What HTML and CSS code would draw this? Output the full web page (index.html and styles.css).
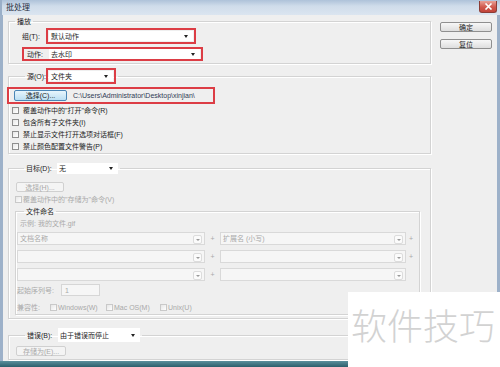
FILE: index.html
```html
<!DOCTYPE html>
<html lang="zh-CN">
<head>
    <meta charset="UTF-8">
    <title>批处理</title>
    <link rel="stylesheet" href="styles.css">
</head>
<body>
<div class="window">
    <div class="titlebar">
        <span class="title">批处理</span>
        <span class="close">
            <svg width="9" height="7" viewBox="0 0 9 7"><path d="M1.5 0.5 L7.5 6.5 M7.5 0.5 L1.5 6.5" stroke="#fff" stroke-width="1.6"/></svg>
        </span>
    </div>

    <div class="client">
        <div class="main">
            <fieldset class="grp grp-play">
                <legend>播放</legend>
                <div class="row row-set">
                    <span class="lbl lbl-set">组(T):</span>
                    <span class="mark mark-set"><span class="select">默认动作<i class="arr"></i></span></span>
                </div>
                <div class="row row-action">
                    <span class="mark mark-action"><span class="lbl lbl-action">动作:</span><span class="select">去水印<i class="arr"></i></span></span>
                </div>
            </fieldset>

            <fieldset class="grp grp-src">
                <legend class="lg-src">
                    <span class="lbl lbl-src">源(O):</span>
                    <span class="mark mark-src"><span class="select">文件夹<i class="arr"></i></span></span>
                </legend>
                <div class="mark mark-choose">
                    <span class="btn btn-focus btn-choose">选择(C)...</span>
                    <span class="path">C:\Users\Administrator\Desktop\xinjian\</span>
                </div>
                <div class="chk"><i class="box"></i>覆盖动作中的"打开"命令(R)</div>
                <div class="chk"><i class="box"></i>包含所有子文件夹(I)</div>
                <div class="chk"><i class="box"></i>禁止显示文件打开选项对话框(F)</div>
                <div class="chk"><i class="box"></i>禁止颜色配置文件警告(P)</div>
            </fieldset>

            <fieldset class="grp grp-dst">
                <legend class="lg-dst">
                    <span class="lbl lbl-dst">目标(D):</span>
                    <span class="select sel-dst">无<i class="arr"></i></span>
                </legend>
                <span class="btn btn-off btn-dst">选择(H)...</span>
                <div class="chk chk-off chk-save"><i class="box"></i>覆盖动作中的"存储为"命令(V)</div>

                <fieldset class="grp grp-name">
                    <legend class="lg-name">文件命名</legend>
                    <div class="sample off">示例: 我的文件.gif</div>
                    <div class="name-row">
                        <span class="select off sel-left">文档名称<i class="arr"></i></span>
                        <span class="plus">+</span>
                        <span class="select off sel-right">扩展名 (小写)<i class="arr"></i></span>
                        <span class="plus plus-end">+</span>
                    </div>
                    <div class="name-row">
                        <span class="select off sel-left"><i class="arr"></i></span>
                        <span class="plus">+</span>
                        <span class="select off sel-right"><i class="arr"></i></span>
                        <span class="plus plus-end">+</span>
                    </div>
                    <div class="name-row">
                        <span class="select off sel-left"><i class="arr"></i></span>
                        <span class="plus">+</span>
                        <span class="select off sel-right"><i class="arr"></i></span>
                    </div>
                    <div class="serial-row off">
                        <span class="lbl-serial">起始序列号:</span>
                        <span class="input">1</span>
                    </div>
                    <div class="compat-row off">
                        <span class="lbl-compat">兼容性:</span>
                        <span class="opt opt-win"><i class="box"></i>Windows(W)</span>
                        <span class="opt opt-mac"><i class="box"></i>Mac OS(M)</span>
                        <span class="opt"><i class="box"></i>Unix(U)</span>
                    </div>
                </fieldset>
            </fieldset>

            <fieldset class="grp grp-err">
                <legend class="lg-err">
                    <span class="lbl lbl-err">错误(B):</span>
                    <span class="select sel-err">由于错误而停止<i class="arr"></i></span>
                </legend>
                <span class="btn btn-off btn-save">存储为(E)...</span>
            </fieldset>
        </div>

        <div class="side">
            <span class="btn btn-side">确定</span>
            <span class="btn btn-side">复位</span>
        </div>
    </div>

    <div class="taskbar"></div>

    <div class="watermark">软件技巧</div>
</div>
</body>
</html>
```

FILE: styles.css
```css
* {
    box-sizing: border-box;
}
body {
    margin: 0;
    font-family: "Liberation Sans", "Noto Sans CJK SC", sans-serif;
    font-size: 7px;
    line-height: 1;
    color: #1c1c1c;
    white-space: nowrap;
}
.window {
    position: relative;
    width: 500px;
    height: 367px;
    overflow: hidden;
    background: #efefef;
}

/* title bar */
.titlebar {
    height: 15px;
    display: flex;
    align-items: center;
    justify-content: space-between;
    padding: 0 3px 0 4px;
    background: linear-gradient(#aec2d9, #cfdcea 40%, #dbe5f0);
    border-left: 2px solid #9aafc8;
}
.title {
    font-size: 8px;
    color: #1f2b3b;
}
.close {
    width: 18px;
    height: 12px;
    margin-top: -2px;
    display: flex;
    align-items: center;
    justify-content: center;
    background: linear-gradient(#e8a096, #d0594d 55%, #c2443a);
    border: 1px solid #8c3c35;
    border-top: none;
    border-radius: 0 0 3px 3px;
}

/* client area */
.client {
    height: 346px;
    display: flex;
    padding: 0 5px;
    border-left: 3px solid #9db1c9;
    border-right: 3px solid #9db1c9;
    overflow: hidden;
}
.main {
    width: 423px;
    flex: none;
}
.side {
    width: 52px;
    margin-left: 9px;
    padding-top: 7px;
    display: flex;
    flex-direction: column;
    gap: 7px;
}
.taskbar {
    height: 6px;
    background: linear-gradient(#5a8f9c, #2c5f6c);
}

/* group boxes */
.grp {
    margin: 0;
    padding: 0;
    min-width: 0;
    border: 1px solid #d3d3d3;
    box-shadow: inset 1px 1px 0 #fff, 1px 1px 0 #fff;
}
.grp legend {
    height: 12px;
    padding: 0 2px;
    margin-left: 6px;
    display: flex;
    align-items: center;
}
.row {
    display: flex;
    align-items: center;
}
.lbl {
    flex: none;
}

/* red highlight frames */
.mark {
    display: flex;
    align-items: center;
    border: 2px solid #dc3d45;
    padding: 1px;
}

/* combo boxes */
.select {
    position: relative;
    display: flex;
    align-items: center;
    height: 100%;
    padding-left: 2px;
    background: #fff;
}
.select .arr {
    position: absolute;
    right: 5px;
    top: 50%;
    margin-top: -1px;
    border-left: 2px solid transparent;
    border-right: 2px solid transparent;
    border-top: 3px solid #222;
}
.select.off {
    background: #f6f6f6;
    border: 1px solid #d9d9d9;
    color: #a9a9a9;
}
.select.off .arr {
    right: 2px;
    margin-top: -4px;
    width: 9px;
    height: 9px;
    border: 1px solid #dcdcdc;
    border-radius: 2px;
    background: #fbfbfb;
}
.select.off .arr::after {
    content: "";
    position: absolute;
    left: 2px;
    top: 3px;
    border-left: 2px solid transparent;
    border-right: 2px solid transparent;
    border-top: 2px solid #9a9a9a;
}

/* buttons */
.btn {
    display: flex;
    align-items: center;
    justify-content: center;
    height: 10px;
    border: 1px solid #8f8f8f;
    border-radius: 2px;
    background: linear-gradient(#f7f7f7, #dedede);
}
.btn-side {
    width: 52px;
}
.btn-focus {
    border-color: #4a86b6;
    background: linear-gradient(#e8f5fc, #bcdff3);
}
.btn-off {
    border-color: #d0d0d0;
    background: #f4f4f4;
    color: #a9a9a9;
}

/* check boxes */
.box {
    display: inline-block;
    flex: none;
    width: 7px;
    height: 7px;
    border: 1px solid #8e8e8e;
    background: linear-gradient(135deg, #e6e6e6, #fff);
}
.chk {
    display: flex;
    align-items: center;
    height: 12px;
    padding-left: 3px;
}
.chk .box {
    margin-right: 4px;
}
.off,
.chk-off {
    color: #a9a9a9;
}
.off .box,
.chk-off .box {
    border-color: #c9c9c9;
}

/* play group */
.grp-play {
    padding-bottom: 2px;
}
.row-set {
    height: 16px;
    margin-top: 1px;
    padding-left: 13px;
}
.lbl-set {
    width: 24px;
}
.mark-set {
    width: 150px;
    height: 16px;
}
.mark-set .select {
    width: 100%;
}
.row-action {
    height: 14px;
    margin-top: 3px;
    padding-left: 13px;
}
.mark-action {
    width: 181px;
    height: 14px;
    padding: 0 1px 0 3px;
}
.lbl-action {
    width: 22px;
}
.mark-action .select {
    flex: 1;
}

/* source group */
.grp-src {
    margin-top: 4px;
    padding-bottom: 1px;
}
.grp-src .lg-src {
    height: 16px;
    margin-left: 16px;
}
.lbl-src {
    width: 19px;
}
.mark-src {
    width: 70px;
    height: 16px;
}
.mark-src .select {
    width: 100%;
}
.mark-choose {
    width: 208px;
    height: 17px;
    margin: 3px 0 0 -2px;
    padding: 0 0 0 5px;
}
.btn-choose {
    width: 53px;
    height: 11px;
}
.path {
    margin-left: 6px;
    color: #2f3b55;
}

/* destination group */
.grp-dst {
    margin-top: 8px;
    padding-bottom: 3px;
}
.grp-dst .lg-dst {
    margin-left: 15px;
}
.lbl-dst {
    width: 31px;
}
.sel-dst {
    width: 61px;
    height: 11px;
}
.btn-dst {
    width: 48px;
    margin: 8px 0 0 7px;
}
.chk-save {
    height: 10px;
    margin-top: 2px;
    padding-left: 6px;
}
.chk-save .box {
    margin-right: 1px;
}

/* file naming */
.grp-name {
    width: 405px;
    margin: 1px 0 0 6px;
    padding-bottom: 1px;
}
.grp-name .lg-name {
    margin-left: 8px;
}
.sample {
    height: 10px;
    margin-top: 1px;
    padding-left: 4px;
    display: flex;
    align-items: center;
}
.name-row {
    display: flex;
    height: 13px;
    margin-top: 4px;
    padding-left: 1px;
}
.name-row + .name-row {
    margin-top: 5px;
}
.sel-left {
    width: 188px;
}
.sel-right {
    width: 186px;
}
.plus {
    width: 15px;
    display: flex;
    align-items: center;
    justify-content: center;
    color: #a9a9a9;
}
.plus-end {
    width: 10px;
}
.serial-row,
.compat-row {
    display: flex;
    align-items: center;
    height: 12px;
    padding-left: 1px;
}
.serial-row {
    margin-top: 3px;
}
.lbl-serial {
    width: 44px;
}
.input {
    width: 39px;
    height: 12px;
    padding-left: 3px;
    display: flex;
    align-items: center;
    border: 1px solid #d6d6d6;
    background: #f6f6f6;
}
.compat-row {
    margin-top: 5px;
}
.lbl-compat {
    width: 33px;
}
.opt {
    display: flex;
    align-items: center;
}
.opt .box {
    margin-right: 1px;
}
.opt-win {
    width: 56px;
}
.opt-mac {
    width: 54px;
}

/* error group */
.grp-err {
    margin-top: 9px;
    padding-bottom: 3px;
}
.grp-err .lg-err {
    height: 14px;
    margin-left: 16px;
}
.lbl-err {
    width: 31px;
}
.sel-err {
    width: 82px;
    height: 14px;
}
.btn-save {
    width: 50px;
    margin: 4px 0 0 7px;
}

/* watermark overlay */
.watermark {
    position: absolute;
    right: 0;
    bottom: 0;
    width: 152px;
    height: 75px;
    padding: 0 0 12px 3px;
    display: flex;
    align-items: center;
    background: #fff;
    font-family: "Noto Sans CJK SC", sans-serif;
    font-size: 36px;
    font-weight: 300;
    color: #d2d2d2;
}
```
